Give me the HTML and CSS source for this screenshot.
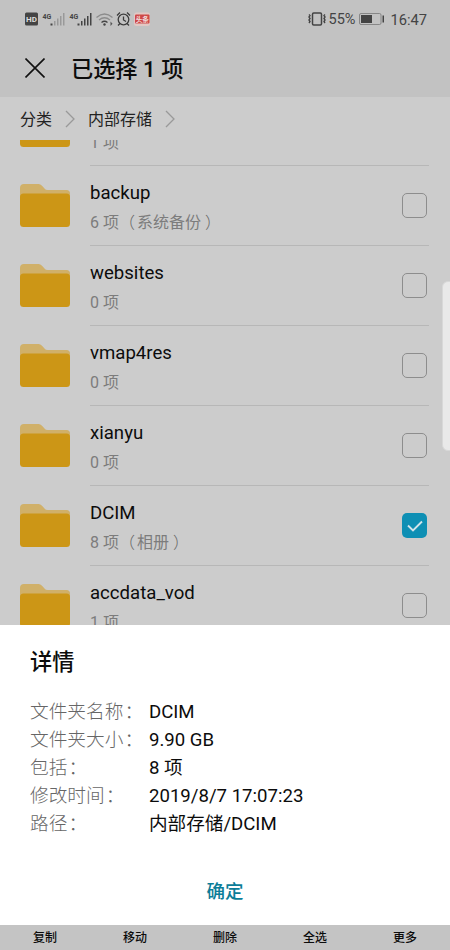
FILE: index.html
```html
<!DOCTYPE html>
<html lang="zh-CN">
<head>
<meta charset="utf-8">
<title>内部存储</title>
<link rel="stylesheet" href="styles.css">
</head>
<body>
<svg class="defs" width="0" height="0" aria-hidden="true">
  <symbol id="folder" viewBox="0 0 50 43">
    <path d="M0 14V4Q0 0 4 0H18.500Q20.500 0 22 1.800L24.500 4.500Q25.500 6 28 6H46.500Q50 6 50 9.500V14Z" fill="#d0b069"/>
    <rect y="9.500" width="50" height="33.500" rx="3.500" fill="#cc9616"/>
  </symbol>
  <symbol id="chevron" viewBox="0 0 10 18">
    <path d="M1 1L9 9L1 17" fill="none" stroke="#999" stroke-width="1.300"/>
  </symbol>
</svg>
<div class="screen">
  <header class="top">
    <div class="status">
      <svg class="status-left" width="130" height="18" viewBox="0 0 130 18">
        <rect x="0" y="2.500" width="13" height="13" rx="1.500" fill="#444"/>
        <text class="hd" x="1" y="12">HD</text>
        <text class="net" x="17.500" y="8.500">4G</text>
        <path d="M25.500 13.500h2v2h-2z" fill="#444"/>
        <path d="M29 11h1.500v4.500h-1.500zM32 8.500h1.500v7h-1.500zM35 6h1.500v9.500h-1.500zM38 3h1.500v12.500h-1.500z" fill="#999"/>
        <text class="net" x="44.500" y="8.500">4G</text>
        <path d="M52.500 13.500h2v2h-2zM56 11h1.500v4.500h-1.500zM59 8.500h1.500v7h-1.500zM62 6h1.500v9.500h-1.500zM65 3h1.500v12.500h-1.500z" fill="#444"/>
        <g fill="none" stroke-width="1.300">
          <path d="M71.500 7.500Q79.500 .500 87.500 7.500M74 10Q79.500 5.500 85 10" stroke="#8c8c8c"/>
          <path d="M76.500 12.500Q79.500 10 82.500 12.500" stroke="#444"/>
        </g>
        <circle cx="79.500" cy="14.500" r="1.200" fill="#444"/>
        <path d="M85.500 11.500l2 2.200-2 2.200z" fill="#555"/>
        <g fill="none" stroke="#3c3c3c" stroke-width="1.300">
          <circle cx="98.500" cy="9.500" r="5.300"/>
          <path d="M98.500 6.500V10l2.500 1.500M92 5.500l3-3M105 5.500l-3-3M95 13.500l-2 2M102 13.500l2 2"/>
        </g>
        <rect x="109" y="2.500" width="16" height="13.500" rx="2.500" fill="#e2c8c4"/>
        <rect x="110" y="4.500" width="14.500" height="9" rx="1" fill="#ce4847"/>
        <text class="news" x="110.700" y="11.500">头条</text>
      </svg>
      <div class="status-right">
        <svg width="18" height="16" viewBox="0 0 18 16" fill="none" stroke="#444">
          <rect x="4.500" y="2" width="9" height="12" rx="1.200" stroke-width="1.500"/>
          <path d="M1 3.500l1 1-1 1.500 1 1.500-1 1.500 1 1.500-1 1.500M17 3.500l-1 1 1 1.500-1 1.500 1 1.500-1 1.500 1 1.500" stroke-width="1.400"/>
        </svg>
        <span class="pct">55%</span>
        <svg class="battery" width="26" height="12" viewBox="0 0 26 12">
          <rect x=".5" y=".5" width="21.500" height="11" rx="1.500" fill="none" stroke="#777" stroke-width=".8"/>
          <rect x="2" y="2" width="11" height="8" fill="#444"/>
          <rect x="23.500" y="2.500" width="1.500" height="7" fill="#444"/>
        </svg>
        <span class="clock">16:47</span>
      </div>
    </div>
    <div class="title-row">
      <svg width="20" height="20" viewBox="0 0 20 20"><path d="M.5 .5L19.500 19.500M19.500 .5L.5 19.500" stroke="#111" stroke-width="1.600"/></svg>
      <h1>已选择 1 项</h1>
    </div>
  </header>
  <nav class="crumbs">
    <span>分类</span><svg><use href="#chevron"/></svg>
    <span>内部存储</span><svg><use href="#chevron"/></svg>
  </nav>
  <main class="viewport">
    <ul class="list">
      <li><svg class="folder"><use href="#folder"/></svg><div class="row"><div><b></b><small>1 项</small></div><i class="box"></i></div></li>
      <li><svg class="folder"><use href="#folder"/></svg><div class="row"><div><b>backup</b><small>6 项<span class="open">（</span>系统备份<span class="close">）</span></small></div><i class="box"></i></div></li>
      <li><svg class="folder"><use href="#folder"/></svg><div class="row"><div><b>websites</b><small>0 项</small></div><i class="box"></i></div></li>
      <li><svg class="folder"><use href="#folder"/></svg><div class="row"><div><b>vmap4res</b><small>0 项</small></div><i class="box"></i></div></li>
      <li><svg class="folder"><use href="#folder"/></svg><div class="row"><div><b>xianyu</b><small>0 项</small></div><i class="box"></i></div></li>
      <li><svg class="folder"><use href="#folder"/></svg><div class="row"><div><b>DCIM</b><small>8 项<span class="open">（</span>相册<span class="close">）</span></small></div><i class="box on"><svg width="25" height="25" viewBox="0 0 25 25"><path d="M6 12.500L11 17.500L20 8.500" fill="none" stroke="#d2e4ea" stroke-width="1.900"/></svg></i></div></li>
      <li><svg class="folder"><use href="#folder"/></svg><div class="row"><div><b>accdata_vod</b><small>1 项</small></div><i class="box"></i></div></li>
    </ul>
  </main>
  <section class="sheet">
    <h2>详情</h2>
    <dl>
      <dt>文件夹名称<span>：</span></dt><dd>DCIM</dd>
      <dt>文件夹大小<span>：</span></dt><dd>9.90 GB</dd>
      <dt>包括<span>：</span></dt><dd>8 项</dd>
      <dt>修改时间<span>：</span></dt><dd>2019/8/7 17:07:23</dd>
      <dt>路径<span>：</span></dt><dd>内部存储/DCIM</dd>
    </dl>
    <button>确定</button>
  </section>
  <footer class="actions"><span>复制</span><span>移动</span><span>删除</span><span>全选</span><span>更多</span></footer>
  <div class="edge-handle"></div>
</div>
</body>
</html>
```
FILE: styles.css
```css
* { box-sizing: border-box; }
body {
  margin: 0;
  font-family: Roboto, "Noto Sans CJK SC", sans-serif;
  color: #0c0c0c;
}
.defs { position: absolute; }
.screen {
  position: relative;
  display: flex;
  flex-direction: column;
  width: 450px;
  height: 950px;
  overflow: hidden;
  background: #cccccc;
}
.top { height: 97px; background: #c2c2c2; flex: none; }
.status {
  display: flex;
  justify-content: space-between;
  align-items: center;
  height: 38px;
  padding: 0 23px 0 25px;
}
.hd { font: 700 8px Roboto; fill: #ddd; }
.net { font: 700 7px Roboto; fill: #444; }
.news { font: 700 6.5px "Noto Sans CJK SC"; fill: #f0dcdc; }
.status-right { display: flex; align-items: center; color: #444; }
.pct { margin: 1px 4px 0 3px; font-size: 14.500px; }
.clock { margin: 1px 0 0 5px; font-size: 14.700px; }
.title-row { display: flex; align-items: center; height: 60px; padding: 2px 0 0 25px; gap: 26px; }
.title-row svg { margin-top: -2px; }
h1 { margin: 0; font-size: 22.200px; font-weight: 500; line-height: 32px; }
.crumbs {
  display: flex;
  align-items: center;
  flex: none;
  height: 43px;
  padding-left: 20px;
  font-size: 16px;
  color: #222;
}
.crumbs span { margin-top: -2px; }
.crumbs svg { width: 10px; height: 18px; margin: 0 13px; }
.viewport { height: 485px; overflow: hidden; flex: none; }
.list { margin: -54px 0 0; padding: 0; list-style: none; }
.list li { display: flex; height: 80px; padding: 0 21px 0 20px; }
.folder { width: 50px; height: 43px; margin: 18px 20px 0 0; flex: none; }
.row {
  display: flex;
  flex: 1;
  justify-content: space-between;
  border-bottom: 1px solid #b7b7b7;
}
.row b { display: block; height: 24px; margin-top: 16px; font-size: 18.600px; font-weight: 400; line-height: 23px; }
.row small { display: block; margin-top: 5px; font-size: 16px; line-height: 24px; font-weight: 400; color: #7c7c7c; }
.open, .close { font-weight: 300; color: #666; }
.open { margin-right: 2px; }
.close { margin-left: 4px; }
.box { width: 25px; height: 25px; margin: 27px 2px 0 0; border: 1.500px solid #8d8d8d; border-radius: 5px; }
.box.on { border: 0; background: #0e8fb4; }
.box svg { display: block; }
.sheet {
  display: flex;
  flex-direction: column;
  height: 300px;
  padding: 21px 30px 0;
  background: #fff;
  flex: none;
}
h2 { margin: 0; font-size: 22.200px; font-weight: 500; line-height: 32px; }
dl {
  display: grid;
  grid-template-columns: 119px 1fr;
  grid-auto-rows: 28px;
  margin: 20px 0 0;
  font-size: 18.600px;
  line-height: 28px;
}
dt { font-size: 18.700px; font-weight: 300; color: #666; white-space: nowrap; }
dt span { margin-left: 1px; }
dd { margin: 0; }
button {
  align-self: center;
  margin-top: 37px;
  padding: 0;
  border: 0;
  background: none;
  font: 500 18.500px/30px "Noto Sans CJK SC", sans-serif;
  color: #0c7d98;
}
.actions {
  display: grid;
  grid-template-columns: repeat(5, 1fr);
  height: 25px;
  background: #c4c4c4;
  font-size: 12px;
  font-weight: 500;
  line-height: 27px;
  text-align: center;
}
.edge-handle {
  position: absolute;
  top: 281px;
  right: -8px;
  width: 16px;
  height: 170px;
  border: 1px solid #d8d8d8;
  border-radius: 6px;
  background: #e9e9e9;
}
```
